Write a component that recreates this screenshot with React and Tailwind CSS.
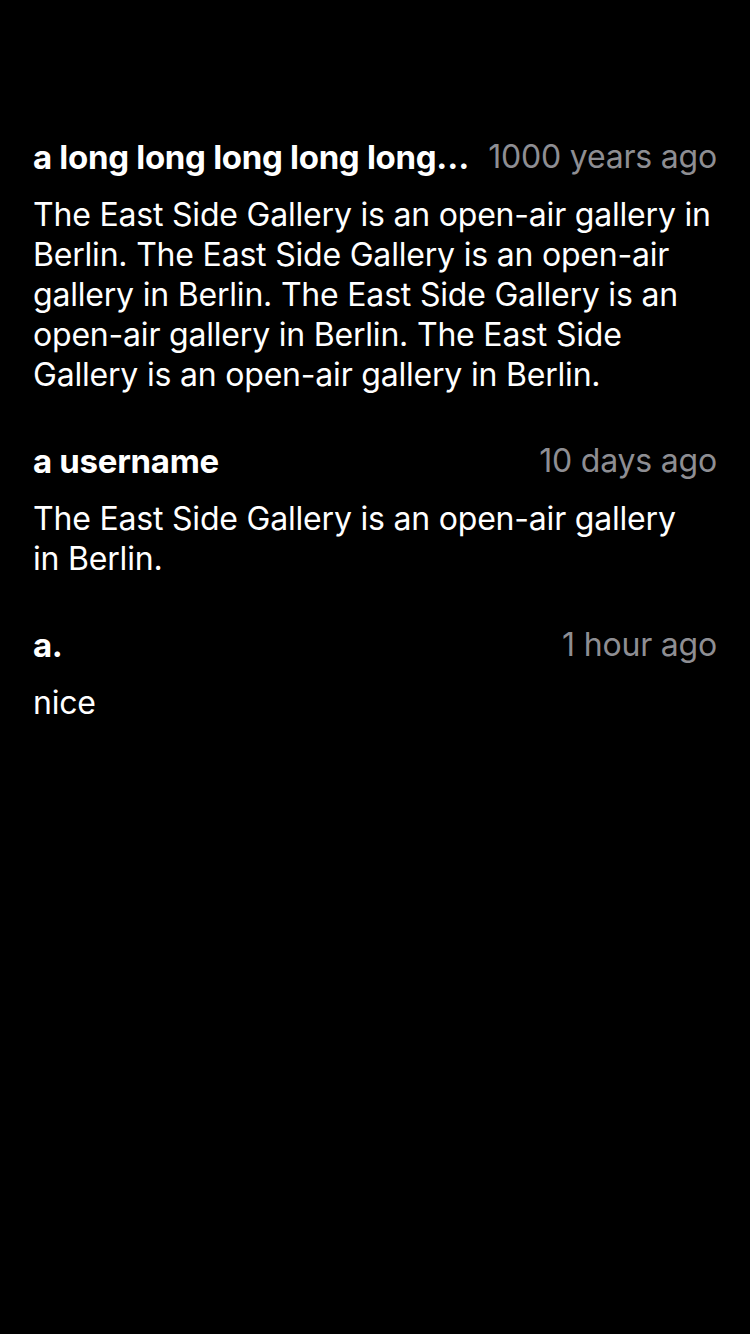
import React from 'react';

const comments = [
  {
    id: 1,
    user: 'a long long long long long…',
    time: '1000 years ago',
    text: 'The East Side Gallery is an open-air gallery in Berlin. The East Side Gallery is an open-air gallery in Berlin. The East Side Gallery is an open-air gallery in Berlin. The East Side Gallery is an open-air gallery in Berlin.',
  },
  {
    id: 2,
    user: 'a username',
    time: '10 days ago',
    text: 'The East Side Gallery is an open-air gallery in Berlin.',
  },
  { id: 3, user: 'a.', time: '1 hour ago', text: 'nice' },
];

const Comment = ({ comment }) => (
  <div className="flex flex-col">
    {/* Header */}
    <div className="flex items-center gap-[10px] h-[40px]">
      <span className="flex-1 min-w-0 truncate text-[33px] font-bold text-white tracking-[-0.3px]">{comment.user}</span>
      <span className="shrink-0 text-[#8e8e93] tracking-[-0.2px]">{comment.time}</span>
    </div>
    {/* Body */}
    <p className="mt-[18px] text-white leading-[40px] tracking-[-0.2px] text-pretty">{comment.text}</p>
  </div>
);

export default function App() {
  return (
    <div
      className="min-h-[1334px] w-[750px] bg-black px-[33px] pt-[137px] text-[32px] leading-[40px]"
      style={{ fontFamily: 'Inter, "Noto Sans", sans-serif' }}
    >
      <div className="flex flex-col gap-[46px]">
        {comments.map((c) => (
          <Comment key={c.id} comment={c} />
        ))}
      </div>
    </div>
  );
}
